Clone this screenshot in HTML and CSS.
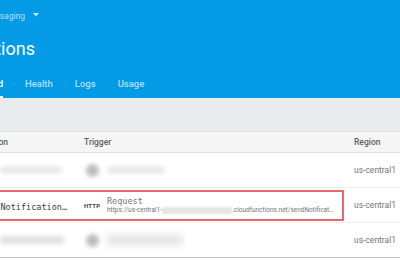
FILE: index.html
```html
<!DOCTYPE html>
<html>
<head>
<meta charset="utf-8">
<link rel="stylesheet" href="styles.css">
</head>
<body>
<div class="app">
  <header class="topbar">
    <div class="project">
      <div class="clip project-name"><span>Messaging</span></div>
      <svg class="caret" width="6" height="4" viewBox="0 0 6 4"><path d="M0 0h6L3 3.5z" fill="rgba(255,255,255,0.75)"/></svg>
    </div>
    <div class="clip title"><span>Functions</span></div>
    <nav class="tabs">
      <div class="tab active clip"><span>Dashboard</span></div>
      <div class="tab">Health</div>
      <div class="tab">Logs</div>
      <div class="tab">Usage</div>
    </nav>
  </header>
  <div class="band"></div>
  <div class="table">
    <div class="thead">
      <div class="clip col-fn-head"><span>Function</span></div>
      <div>Trigger</div>
      <div>Region</div>
    </div>
    <div class="row">
      <div><span class="blob blob-name"></span></div>
      <div class="trigger-blur"><span class="blob-dot"></span><span class="blob blob-text"></span></div>
      <div class="region">us-central1</div>
    </div>
    <div class="row">
      <div class="highlight">
        <div class="clip fn-name"><span>sendNotification…</span></div>
        <div class="trigger">
          <span class="badge">HTTP</span>
          <div class="trigger-info">
            <div class="trigger-type">Request</div>
            <div class="trigger-url">https://us-central1-<span class="redacted"></span>.cloudfunctions.net/sendNotificat…</div>
          </div>
        </div>
      </div>
      <div class="region">us-central1</div>
    </div>
    <div class="row last">
      <div><span class="blob blob-name2"></span></div>
      <div class="trigger-blur"><span class="blob-dot"></span><span class="blob blob-text2"></span></div>
      <div class="region">us-central1</div>
    </div>
  </div>
</div>
</body>
</html>
```
FILE: styles.css
```css
* { box-sizing: border-box; }
body {
  margin: 0;
  width: 400px;
  height: 260px;
  overflow: hidden;
  background: #fff;
  font-family: Roboto, "Liberation Sans", sans-serif;
}
.clip {
  display: flex;
  justify-content: flex-end;
  white-space: nowrap;
}
.clip > span { flex-shrink: 0; }

.topbar {
  height: 98px;
  background: #039be5;
  display: flex;
  flex-direction: column;
}
.project {
  display: flex;
  align-items: center;
  height: 12px;
  margin-top: 10px;
  font-size: 8.5px;
  line-height: 12px;
  color: rgba(255,255,255,0.7);
}
.project-name { width: 25px; }
.caret { margin-left: 8px; margin-bottom: 2px; }
.title {
  width: 35px;
  margin-top: 15px;
  font-size: 18px;
  line-height: 24px;
  color: #fff;
}
.tabs {
  display: flex;
  gap: 22px;
  margin-top: auto;
  font-size: 9.5px;
  font-weight: 500;
  color: rgba(255,255,255,0.7);
}
.tab {
  line-height: 12px;
  padding-bottom: 6px;
  border-bottom: 2px solid transparent;
  white-space: nowrap;
}
.tab.active {
  width: 3px;
  color: #fff;
  border-bottom-color: #fff;
}

.band {
  height: 33px;
  background: #e9ebee;
}

.thead {
  display: grid;
  grid-template-columns: 84px 270px 1fr;
  align-items: center;
  height: 22px;
  background: #f5f5f5;
  border-top: 1px solid #e0e0e0;
  border-bottom: 1px solid #e0e0e0;
  font-size: 8.5px;
  font-weight: 500;
  color: #616161;
}
.col-fn-head { width: 8px; }

.row {
  display: grid;
  grid-template-columns: 84px 270px 1fr;
  align-items: center;
  height: 35px;
  border-bottom: 1px solid #eeeeee;
}
.row.last { border-bottom-color: #c6c6c6; }
.region {
  font-size: 8.5px;
  color: #757575;
}

.blob {
  display: block;
  background: #e2e2e2;
  filter: blur(2.5px);
  border-radius: 3px;
}
.blob-name { width: 62px; height: 6px; }
.blob-name2 { width: 64px; height: 8px; background: #dedede; }
.trigger-blur {
  display: flex;
  align-items: center;
  gap: 8px;
}
.blob-dot {
  display: block;
  width: 13px;
  height: 13px;
  margin-left: 2px;
  border-radius: 50%;
  background: #bdbdbd;
  filter: blur(2px);
}
.blob-text { width: 58px; height: 6px; }
.blob-text2 { width: 76px; height: 12px; background: #e6e6e6; filter: blur(3.5px); }

.highlight {
  grid-column: 1 / 3;
  display: grid;
  grid-template-columns: 86px 1fr;
  align-items: center;
  height: 31px;
  margin-left: -4px;
  margin-right: 10px;
  border: 2px solid #e36a6a;
}
.fn-name {
  width: 69px;
  padding-top: 3px;
  font-family: "DejaVu Sans Mono", "Liberation Mono", monospace;
  font-size: 8.5px;
  color: #3c3c3c;
}
.trigger {
  display: flex;
  align-items: center;
  gap: 7px;
}
.badge {
  width: 16px;
  font-size: 6px;
  font-weight: 700;
  letter-spacing: 0.2px;
  color: #424242;
  padding-top: 1px;
}
.trigger-info {
  display: flex;
  flex-direction: column;
  padding-top: 1px;
}
.trigger-type {
  font-family: "DejaVu Sans Mono", "Liberation Mono", monospace;
  font-size: 8.5px;
  line-height: 10px;
  color: #757575;
}
.trigger-url {
  display: flex;
  align-items: center;
  white-space: nowrap;
  font-size: 6.5px;
  line-height: 9px;
  color: #757575;
}
.redacted {
  display: block;
  width: 70px;
  height: 7px;
  background: #e4e4e4;
  filter: blur(1px);
}
```
